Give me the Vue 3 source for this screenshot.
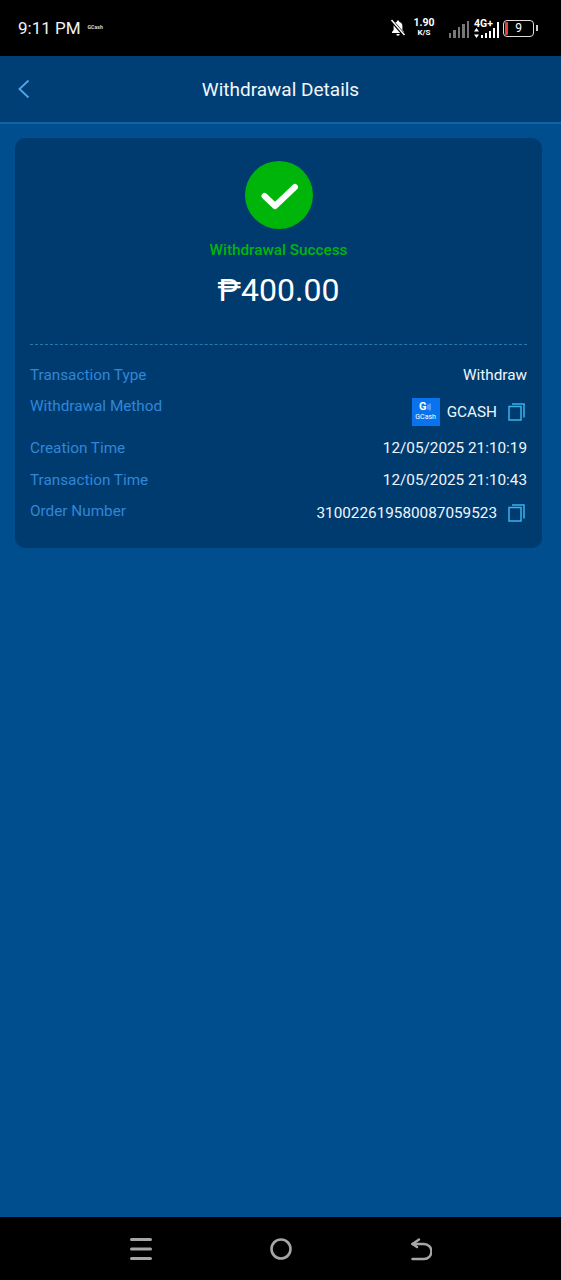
<script setup>
const bars = [5, 8, 11, 14, 17]
const rows = [
  { label: 'Transaction Type', value: 'Withdraw', cls: 'r-type' },
  { label: 'Withdrawal Method', value: 'GCASH', logo: true, copy: true, cls: 'r-method' },
  { label: 'Creation Time', value: '12/05/2025 21:10:19', cls: 'r-time' },
  { label: 'Transaction Time', value: '12/05/2025 21:10:43', cls: 'r-time' },
  { label: 'Order Number', value: '310022619580087059523', copy: true, cls: 'r-order' },
]
</script>

<template>
  <div class="page">
    <div class="status">
      <div class="status-left">
        <span class="clock">9:11 PM</span>
        <span class="notif">GCash</span>
      </div>
      <div class="status-right">
        <svg class="bell" width="16" height="18" viewBox="0 0 16 18">
          <path d="M8 1.500c-.7 0-1.200.5-1.200 1.200C4.800 3.300 3.600 5 3.600 7v4L2 13v1h12v-1l-1.600-2V7c0-2-1.200-3.700-3.200-4.300 0-.7-.5-1.200-1.200-1.200z" fill="#fff"/>
          <path d="M6.300 15h3.400a1.700 1.700 0 0 1-3.400 0z" fill="#fff"/>
          <path d="M1.500 1.500 14.500 16.500" stroke="#000" stroke-width="3.400"/>
          <path d="M1.500 1 14.500 16" stroke="#fff" stroke-width="1.500"/>
        </svg>
        <div class="speed"><span>1.90</span><span class="unit">K/S</span></div>
        <div class="sig sig-dim">
          <i v-for="h in bars" :key="h" :style="{ height: h + 'px' }"></i>
        </div>
        <div class="net">
          <span class="net-label">4G+</span>
          <div class="net-row">
            <svg width="5" height="10" viewBox="0 0 5 10"><path d="M2.500 0 5 3.500H0zM0 6.500h5L2.500 10z" fill="#fff"/></svg>
            <div class="sig">
              <i v-for="h in [3, 5, 7, 10, 16]" :key="h" :style="{ height: h + 'px' }"></i>
            </div>
          </div>
        </div>
        <div class="battery">
          <span class="batt-level"></span>
          <span class="batt-num">9</span>
        </div>
        <span class="batt-tip"></span>
      </div>
    </div>

    <header class="head">
      <svg class="back" width="14" height="20" viewBox="0 0 14 20">
        <path d="M11.500 1.500 2.500 10l9 8.500" fill="none" stroke="#4fa6ea" stroke-width="1.800"/>
      </svg>
      <h1 class="title">Withdrawal Details</h1>
    </header>

    <main class="body">
      <section class="card">
        <div class="summary">
          <div class="tick">
            <svg width="38" height="30" viewBox="0 0 38 30">
              <path d="M4.500 16 15 26 35 7" fill="none" stroke="#fff" stroke-width="6" stroke-linecap="round" stroke-linejoin="round"/>
            </svg>
          </div>
          <div class="state">Withdrawal Success</div>
          <div class="amount">₱400.00</div>
        </div>
        <div class="rows">
          <div v-for="r in rows" :key="r.label" class="row" :class="r.cls">
            <span class="label">{{ r.label }}</span>
            <span class="value">
              <span v-if="r.logo" class="logo">
                <span class="logo-mark">
                  <span class="logo-g">G</span>
                  <svg width="5" height="8" viewBox="0 0 5 8">
                    <path d="M1 1.500v5M3 .5v7" stroke="#9cc6ff" stroke-width="1"/>
                  </svg>
                </span>
                <span class="logo-text">GCash</span>
              </span>
              <span>{{ r.value }}</span>
              <svg v-if="r.copy" class="copy" width="17" height="18" viewBox="0 0 17 18">
                <rect x="1" y="3.500" width="12" height="13.500" fill="none" stroke="#3bb2e8" stroke-width="1.500"/>
                <path d="M4 1h12v13.500" fill="none" stroke="#3bb2e8" stroke-width="1.500"/>
              </svg>
            </span>
          </div>
        </div>
      </section>
    </main>

    <nav class="nav">
      <svg width="22" height="24" viewBox="0 0 22 24">
        <path d="M1.500 2.500h19M1.500 12h19M1.500 21.500h19" stroke="#a6a6a6" stroke-width="3" stroke-linecap="round"/>
      </svg>
      <svg width="22" height="24" viewBox="0 0 22 24">
        <circle cx="11" cy="12" r="9.500" fill="none" stroke="#a6a6a6" stroke-width="2.600"/>
      </svg>
      <svg width="22" height="24" viewBox="0 0 22 24">
        <path d="M2.500 7H14a7.500 7.500 0 0 1 0 15H2.500" fill="none" stroke="#a6a6a6" stroke-width="2.500" stroke-linecap="round"/>
        <path d="M9 2.500 2.500 7 7 10" fill="none" stroke="#a6a6a6" stroke-width="2.500" stroke-linecap="round" stroke-linejoin="round"/>
      </svg>
    </nav>
  </div>
</template>

<style>
html, body { margin: 0; background: #004e8d; }
</style>

<style scoped>
.page {
  width: 561px;
  height: 1280px;
  display: flex;
  flex-direction: column;
  font-family: Roboto, "Liberation Sans", sans-serif;
  background: #004e8d;
  overflow: hidden;
}
.status {
  height: 56px;
  background: #000;
  color: #fff;
  display: flex;
  align-items: center;
  justify-content: space-between;
  padding: 0 23px 0 18px;
  flex: none;
}
.status-left { display: flex; align-items: center; gap: 7px; }
.clock { font-size: 17px; color: #f2f2f2; }
.notif { font-size: 5.200px; font-weight: 700; margin-bottom: 2px; color: #ddd; }
.status-right { display: flex; align-items: center; }
.bell { margin-right: 7px; }
.speed {
  display: flex;
  flex-direction: column;
  align-items: center;
  font-size: 10.500px;
  font-weight: 700;
  line-height: 10px;
  margin-right: 14px;
}
.unit { font-size: 8px; }
.sig { display: flex; align-items: flex-end; gap: 2px; }
.sig i { display: block; width: 2.500px; background: #fff; }
.sig-dim { margin-right: 5px; margin-top: 3px; }
.sig-dim i { background: #777; }
.net { display: flex; flex-direction: column; width: 25px; position: relative; height: 20px; margin-right: 4px; }
.net-label { font-size: 10.500px; font-weight: 700; line-height: 11px; }
.net-row { position: absolute; left: 0; right: 0; bottom: 0; display: flex; align-items: flex-end; justify-content: space-between; }
.net-row .sig { gap: 1.500px; }
.battery {
  width: 29px;
  height: 15px;
  border: 1.500px solid #ddd;
  border-radius: 4px;
  position: relative;
  display: flex;
  align-items: center;
  justify-content: center;
}
.batt-level { position: absolute; left: 1px; top: 1px; bottom: 1px; width: 3px; background: #e5403a; border-radius: 1px; }
.batt-num { font-size: 12px; line-height: 1; }
.batt-tip { width: 2px; height: 6px; background: #ccc; margin-left: 2px; }

.head {
  height: 66px;
  flex: none;
  position: relative;
  background: #003f75;
  border-bottom: 2px solid #0f63a8;
  display: flex;
  align-items: center;
  justify-content: center;
}
.back { position: absolute; left: 17px; top: 23px; }
.title { margin: 0; font-size: 19px; font-weight: 400; color: #f2f7fc; }

.body { flex: 1; padding: 14px 19px 0 15px; }
.card {
  background: #003b70;
  border-radius: 10px;
  padding: 23px 15px 0;
  height: 410px;
  box-sizing: border-box;
}
.summary {
  display: flex;
  flex-direction: column;
  align-items: center;
  border-bottom: 1px dashed #2c77ad;
  height: 184px;
  box-sizing: border-box;
}
.tick {
  width: 68px;
  height: 68px;
  border-radius: 50%;
  background: #00b50a;
  display: flex;
  align-items: center;
  justify-content: center;
}
.state { margin-top: 11px; font-size: 15.300px; line-height: 20px; font-weight: 500; color: #00b50a; }
.amount { margin-top: 10px; font-size: 32px; line-height: 41px; color: #fff; }

.rows { display: flex; flex-direction: column; padding-top: 20px; }
.row { display: flex; justify-content: space-between; align-items: flex-start; font-size: 15.300px; line-height: 20px; }
.r-type { height: 31px; }
.r-method { height: 42px; }
.r-time { height: 31.500px; }
.label { color: #3087d6; }
.value { display: flex; align-items: center; color: #eef6fc; }
.r-method .value { margin-top: 1.500px; }
.r-order .value { margin-top: 2px; }
.copy { margin-left: 11px; margin-right: 2px; }
.logo {
  width: 28px;
  height: 28px;
  background: #0a72ec;
  display: flex;
  flex-direction: column;
  align-items: center;
  justify-content: center;
  margin-right: 7px;
}
.logo-mark { display: flex; align-items: center; gap: 1px; height: 12px; }
.logo-g { font-size: 11px; line-height: 12px; font-weight: 700; color: #fff; }
.logo-text { font-size: 7px; line-height: 9px; color: #fff; }

.nav {
  height: 63px;
  flex: none;
  background: #000;
  display: flex;
  align-items: center;
  justify-content: center;
  gap: 118px;
}
</style>
